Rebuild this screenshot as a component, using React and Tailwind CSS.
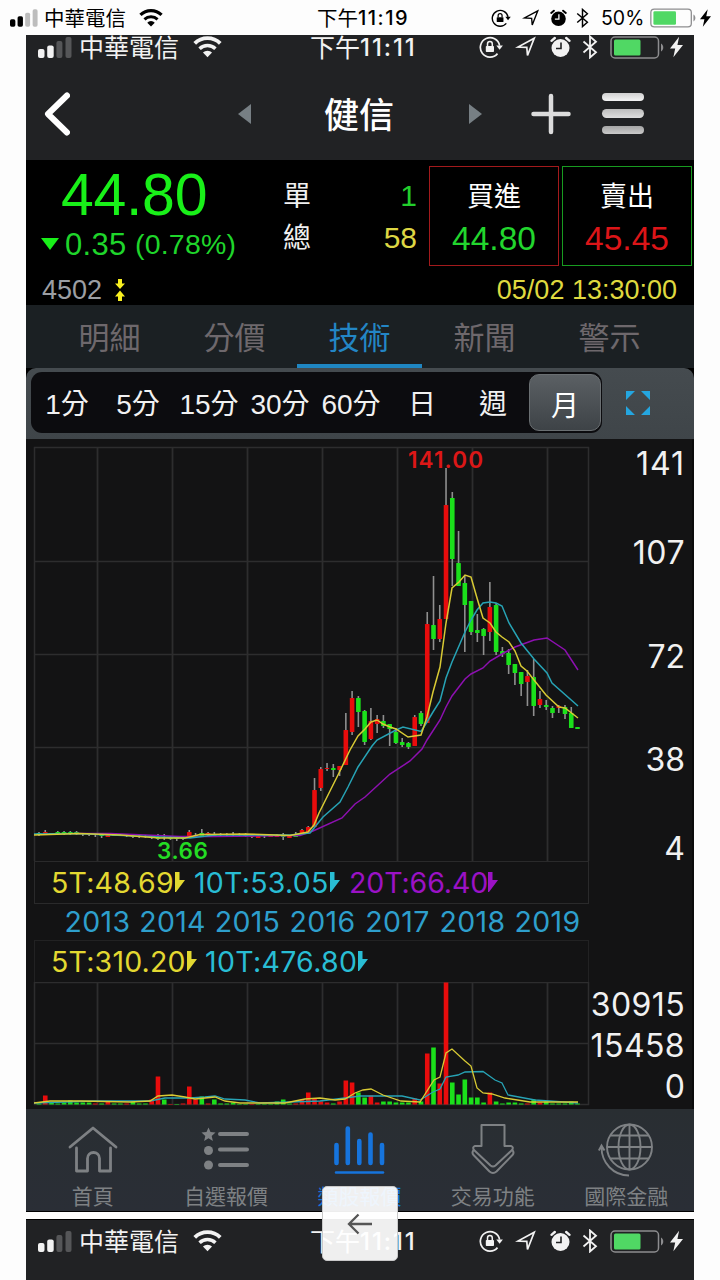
import React from "react";

const UP = "#e80c0c";
const DOWN = "#1be01b";
const YELLOW = "#d8ca34";
const CYAN = "#27a3b5";
const PURPLE = "#8d10b0";
const GRID = "#2d2d2e";

// [high, open/close top, open/close bottom, low, rising]
const candles = [
  [832, 833, 835, 836, 0], [830, 832, 835, 835, 1], [833, 833, 835, 835, 0], [831, 832, 834, 835, 0],
  [831, 832, 834, 835, 0], [831, 832, 834, 835, 0], [831, 832, 834, 835, 0], [833, 833, 834, 836, 0],
  [833, 834, 835, 836, 1], [833, 834, 835, 837, 0], [834, 835, 836, 838, 0], [834, 835, 837, 837, 1],
  [834, 835, 836, 836, 0], [834, 835, 836, 836, 1], [834, 835, 836, 837, 0], [835, 836, 837, 838, 0],
  [835, 836, 837, 838, 0], [835, 836, 837, 838, 0], [835, 837, 838, 839, 0], [834, 837, 839, 840, 0],
  [834, 837, 838, 840, 0], [836, 838, 839, 840, 0], [837, 838, 839, 841, 0], [837, 838, 839, 840, 0],
  [830, 832, 837, 837, 1], [833, 835, 837, 837, 1], [829, 833, 836, 836, 0], [832, 833, 835, 836, 1],
  [832, 834, 836, 836, 0], [833, 834, 835, 836, 0], [833, 834, 835, 836, 0], [832, 834, 835, 836, 0],
  [833, 834, 835, 836, 0], [833, 834, 836, 837, 0], [834, 835, 837, 838, 1], [834, 836, 838, 838, 1],
  [834, 835, 836, 838, 0], [834, 835, 837, 837, 1], [834, 836, 837, 837, 1], [833, 836, 837, 840, 0],
  [835, 835, 838, 838, 1], [832, 835, 837, 837, 0], [829, 830, 834, 834, 1], [826, 827, 832, 832, 1],
  [778, 790, 827, 827, 1], [767, 769, 788, 791, 1], [763, 768, 769, 771, 1], [764, 768, 770, 777, 0],
  [766, 766, 770, 776, 1], [713, 730, 765, 765, 1], [691, 698, 732, 735, 1], [696, 698, 712, 727, 0],
  [710, 711, 742, 745, 0], [708, 721, 739, 740, 1], [715, 719, 724, 733, 1], [715, 721, 726, 728, 0],
  [724, 724, 729, 746, 0], [728, 732, 743, 744, 0], [738, 742, 745, 747, 0], [742, 743, 747, 749, 0],
  [715, 717, 746, 746, 1], [711, 713, 724, 726, 0], [612, 624, 723, 723, 1], [576, 625, 639, 650, 0],
  [605, 619, 639, 642, 1], [468, 505, 619, 619, 1], [492, 498, 559, 586, 0], [531, 563, 586, 586, 0],
  [575, 583, 605, 652, 0], [601, 601, 632, 635, 0], [614, 630, 633, 642, 0], [628, 629, 636, 655, 0],
  [582, 607, 632, 641, 1], [603, 605, 652, 655, 0], [647, 651, 654, 657, 0], [649, 653, 665, 674, 0],
  [664, 664, 673, 685, 0], [672, 672, 684, 696, 0], [670, 676, 682, 706, 1], [659, 677, 706, 716, 0],
  [691, 699, 705, 708, 1], [700, 705, 707, 710, 0], [706, 708, 713, 718, 0], [705, 706, 708, 713, 1],
  [705, 707, 714, 719, 0], [707, 713, 728, 728, 0], [727, 727, 729, 729, 0],
].map((c, i) => ({ x: 39 + i * 6.262, c }));

const volumes = [
  1, 9, 2, 1, 2, 4, 2, 2, 2, 1, 1, 3, 1, 1, 1, 3, 1, 1, 5, 28, 5, 0.5, 0.5, 1, 18, 5, 8, 1, 5, 1, 1, 2,
  0.5, 0.5, 0.5, 0.5, 0.5, 0.5, 3, 5, 1, 1, 5, 12, 6, 3, 2, 1, 3, 24, 22, 12, 7, 9, 2, 3, 3, 2, 2, 2, 6,
  3, 51, 57, 21, 122, 22, 10, 25, 7, 7, 2, 12, 3, 1, 2, 2, 1, 1, 5, 2, 3, 1, 1, 1, 3, 1,
];
const volumeUp = [1, 9, 11, 14, 18, 19, 21, 23, 24, 25, 27, 34, 41, 42, 43, 44, 45, 46, 48, 49, 50, 53, 54, 60, 62, 64, 65, 72, 78, 80];

const ma5 =
  "34,835 80,833.5 120,835 160,838 185,838 200,834.5 245,834 290,835.5 308,832 314,825 319,813 339,773 350,750 358,736 365,729 371,722 377,720 383,724 390,727 396,729 408,737 421,735 427,717 433,692 440,667 446,623 452,588 459,582 465,575 471,577 477,598 483,618 490,623 496,632 502,637 509,642 515,651 521,666 527,671 534,680 546,695 559,707 565,708 578,718";
const ma10 =
  "34,834 75,833.5 160,837 190,838 215,835 250,835 290,835 310,833 323,817 340,802 348,787 358,767 372,746 377,740 396,730 403,727 421,731.5 427,722 433,712 440,701 446,678 452,662 465,632 471,620 477,610 483,603 490,602 496,603 502,606 509,623 521,643 534,659 547,673 552,683 578,706";
const ma20 =
  "75,833.5 110,833.5 180,836.5 215,836.5 300,835.5 313,831 342,818 355,804 365,797 377,786 390,774 410,761 422,749 427,740 440,720 446,707 452,696 465,679 471,674 483,668 490,661 502,654 515,647 534,640 547,638 565,650 578,670";
const vol5 =
  "34,1103 50,1101 80,1101 130,1102 150,1101 158,1096 172,1095 185,1097 195,1099 215,1097 225,1101 240,1103 285,1103 305,1099 320,1098 335,1100 345,1099 355,1093 363,1090 371,1089 383,1095 401,1101 420,1102 434,1080 440,1077 446,1053 452,1049 465,1061 471,1066 477,1088 483,1093 492,1094 505,1098 530,1102 578,1102";
const vol10 =
  "34,1103 95,1101 150,1101 165,1098 190,1098 205,1097 215,1096 225,1099 245,1100 260,1103 320,1101 345,1098 360,1096 402,1096 420,1100 433,1092 440,1089 446,1077 458,1075 465,1072 483,1071.5 495,1080 502,1083 508,1095 535,1100 578,1103";

const gridX = [97.5, 172.5, 247.5, 322.5, 397.5, 472.5, 547.5];

const Signal = ({ className }) => (
  <svg viewBox="0 0 34 21" className={className} fill="currentColor">
    <rect x="0" y="12" width="6.5" height="9" rx="2" />
    <rect x="9.2" y="8.5" width="6.5" height="12.5" rx="2" />
    <rect x="18.4" y="4" width="6" height="17" rx="2" opacity=".25" />
    <rect x="27.5" y="0" width="6" height="21" rx="2" opacity=".25" />
  </svg>
);

const Wifi = ({ className }) => (
  <svg viewBox="0 0 30 22" className={className} fill="none" stroke="currentColor">
    <path d="M1.8 7.2a19 19 0 0 1 26.4 0" strokeWidth="4" />
    <path d="M6.8 12.7a11.8 11.8 0 0 1 16.4 0" strokeWidth="3.6" />
    <path d="M15 21.5l-4.7-4.7a6.6 6.6 0 0 1 9.4 0z" fill="currentColor" stroke="none" />
  </svg>
);

const RotationLock = ({ className }) => (
  <svg viewBox="0 0 24 22" className={className} fill="none" stroke="currentColor">
    <path d="M18.5 17.6A9.7 9.7 0 1 1 20.6 9.6" strokeWidth="1.7" />
    <path d="M17.3 9.6h6.6l-3.3 4.2z" fill="currentColor" stroke="none" />
    <rect x="6.8" y="10" width="8.2" height="6" rx=".8" fill="currentColor" stroke="none" />
    <path d="M8.5 10.2V8a2.4 2.4 0 0 1 4.8 0v2.2" strokeWidth="1.5" />
  </svg>
);

const Location = ({ className }) => (
  <svg viewBox="0 0 22 22" className={className} fill="none" stroke="currentColor" strokeWidth="1.7">
    <path d="M19.2 2.3L3 11l8.800.4L12.500 19.500z" />
  </svg>
);

const Alarm = ({ className, hands }) => (
  <svg viewBox="0 0 21 22" className={className} fill="none" stroke="currentColor">
    <circle cx="10.5" cy="12" r="9" fill="currentColor" stroke="none" />
    <path d="M1.500 4.800L4.800 2M19.500 4.800L16.200 2" strokeWidth="2.4" strokeLinecap="round" />
    <path d="M11 6.500V12.500H6" className={hands} strokeWidth="1.6" />
  </svg>
);

const Bluetooth = ({ className }) => (
  <svg viewBox="0 0 16 24" className={className} fill="none" stroke="currentColor" strokeWidth="1.8">
    <path d="M1.500 6.500L14 17.200 8 22.500V1.500L14 6.800 1.500 17.500" />
  </svg>
);

const Battery = ({ className }) => (
  <svg viewBox="0 0 54 23" className={className} fill="none">
    <rect x="1" y="1" width="47.500" height="21" rx="4" stroke="#8d8d8f" strokeWidth="1.500" />
    <rect x="4" y="3.600" width="26.500" height="15.800" rx="1.500" fill="#50d864" />
    <path d="M51 7.500c3 1.500 3 6.500 0 8z" fill="#8d8d8f" />
  </svg>
);

const Bolt = ({ className }) => (
  <svg viewBox="0 0 14 22" className={className} fill="currentColor">
    <path d="M9.800 0L0 12.500h5.600L3.600 22 14 8.800H8z" />
  </svg>
);

// iOS status bar of the captured app
const InnerStatus = ({ offset }) => (
  <div className={`flex h-[26px] shrink-0 items-center text-[#f2f2f2] ${offset}`}>
    <Signal className="ml-3 h-[21px] w-[34px] shrink-0" />
    <span className="ml-[7px] w-[100px] pt-[2px] text-[25px] leading-[26px]">中華電信</span>
    <Wifi className="ml-[14px] h-[22px] w-[29px] shrink-0" />
    <div className="ml-[88px] flex w-[110px] items-center text-[25px] leading-[26px]">
      <span className="pt-[2px]">下午</span>
      <span className="pt-px font-['Inter',sans-serif] text-[24px] font-medium tracking-[1.900px]">11:11</span>
    </div>
    <RotationLock className="ml-[59px] h-[22px] w-6 shrink-0" />
    <Location className="ml-[12px] h-[22px] w-[22px] shrink-0" />
    <Alarm className="ml-[13px] h-[22px] w-[21px] shrink-0" hands="stroke-[#212224]" />
    <Bluetooth className="ml-[11px] h-6 w-4 shrink-0" />
    <Battery className="ml-[12px] h-[23px] w-[54px] shrink-0" />
    <Bolt className="ml-[6px] h-[22px] w-[13px] shrink-0" />
  </div>
);

const OuterStatus = () => (
  <div className="flex h-[35px] items-center text-black">
    <Signal className="ml-[10px] h-[18px] w-7 shrink-0" />
    <span className="ml-[6px] w-[83px] pt-[2px] text-[20.500px] leading-[33px]">中華電信</span>
    <Wifi className="ml-[12px] h-[18px] w-6 shrink-0" />
    <div className="ml-[154px] flex w-[93px] items-center text-[20.500px] leading-[33px]">
      <span className="pt-[2px]">下午</span>
      <span className="pt-px font-['Inter',sans-serif] text-[20px] font-medium tracking-[1.500px]">11:19</span>
    </div>
    <RotationLock className="ml-[81px] h-[18px] w-5 shrink-0" />
    <Location className="ml-[11px] h-[18px] w-[18px] shrink-0" />
    <Alarm className="ml-[10px] h-[18px] w-[17px] shrink-0" hands="stroke-white" />
    <Bluetooth className="ml-[9px] h-5 w-[13px] shrink-0" />
    <span className="ml-[12px] w-[43px] pt-[2px] font-['Inter',sans-serif] text-[19.500px]">50%</span>
    <Battery className="ml-[6px] h-[20px] w-[46px] shrink-0" />
    <Bolt className="ml-[4px] h-[18px] w-[11px] shrink-0" />
  </div>
);

const NavBar = () => (
  <div className="flex h-[107px] shrink-0 items-center">
    <svg viewBox="0 0 26 44" className="ml-[18px] h-11 w-[26px]" fill="none" stroke="#fff" strokeWidth="6" strokeLinecap="round" strokeLinejoin="round">
      <path d="M23 3.500L4 22l19 18.500" />
    </svg>
    <svg viewBox="0 0 13 20" className="ml-[168px] h-5 w-[13px]" fill="#777f84">
      <path d="M13 0v20L0 10z" />
    </svg>
    <h1 className="ml-[73px] w-[70px] pt-1 text-[35px] leading-[48px] font-medium text-white">健信</h1>
    <svg viewBox="0 0 13 20" className="ml-[75px] h-5 w-[13px]" fill="#777f84">
      <path d="M0 0v20l13-10z" />
    </svg>
    <svg viewBox="0 0 40 42" className="ml-[49px] h-[42px] w-10" fill="none" stroke="#dcdcdc" strokeWidth="4.500" strokeLinecap="round">
      <path d="M20 3v36M2.500 21h35" />
    </svg>
    <div className="ml-[31px] flex w-[42px] flex-col gap-2">
      <div className="h-[8.500px] rounded-full bg-linear-to-b from-[#d0d0d0] to-[#f4f4f4]" />
      <div className="h-[8.500px] rounded-full bg-linear-to-b from-[#bdbdbd] to-[#dedede]" />
      <div className="h-[8.500px] rounded-full bg-linear-to-b from-[#a5a5a5] to-[#c9c9c9]" />
    </div>
  </div>
);

const Quote = () => (
  <section className="flex h-[145px] flex-col bg-black leading-none">
    <div className="flex h-[110px]">
      <div className="w-[240px]">
        <div className="pt-[5px] pl-[35px] text-[59px] leading-[60px] tracking-[-0.300px] text-[#19f019]">44.80</div>
        <div className="mt-[4px] flex h-[30px] items-center pl-[15px] text-[#1fd52b]">
          <svg viewBox="0 0 18 12" className="mr-[6px] h-3 w-[18px]" fill="#19f019">
            <path d="M0 0h18L9 12z" />
          </svg>
          <span className="w-[70px] text-[31px] tracking-[0.300px]">0.35</span>
          <span className="text-[28.500px] tracking-[0.200px]">(0.78%)</span>
        </div>
      </div>
      <div className="flex w-[151px] flex-col pt-[14px]">
        <div className="flex h-[42px] items-center justify-between pl-[17px]">
          <span className="pt-[3px] text-[28px] text-[#f0f0f0]">單</span>
          <span className="pt-px text-[30px] text-[#22cf2c]">1</span>
        </div>
        <div className="flex h-[42px] items-center justify-between pl-[17px]">
          <span className="pt-[3px] text-[28px] text-[#f0f0f0]">總</span>
          <span className="pt-px text-[30px] text-[#ddd643]">58</span>
        </div>
      </div>
      <div className="mt-[6px] ml-[12px] flex h-[100px] w-[130px] flex-col items-center border-[1.500px] border-[#a31a1c] pt-[16px]">
        <span className="text-[27px] leading-[29px] text-white">買進</span>
        <span className="mt-[11px] text-[33.500px] leading-[32px] text-[#22d62e]">44.80</span>
      </div>
      <div className="mt-[6px] ml-[3px] flex h-[100px] w-[130px] flex-col items-center border-[1.500px] border-[#189b20] pt-[16px]">
        <span className="text-[27px] leading-[29px] text-white">賣出</span>
        <span className="mt-[11px] text-[33.500px] leading-[32px] text-[#dc1518]">45.45</span>
      </div>
    </div>
    <div className="flex h-[35px] items-center pt-[6px] pr-[17px] pl-4 text-[27px]">
      <span className="text-[#9b9ea3]">4502</span>
      <svg viewBox="0 0 10 22" className="-mt-[2px] ml-[13px] h-[22px] w-[10px]" fill="#f8ef20">
        <path d="M3 0h4v4.500h3L5 10 0 4.500h3zM3 22h4v-4.500h3L5 11.500 0 17.500h3z" />
      </svg>
      <span className="ml-auto text-[#dfd83f]">05/02 13:30:00</span>
    </div>
  </section>
);

const tabs = ["明細", "分價", "技術", "新聞", "警示"];

const Tabs = () => (
  <nav className="flex h-[63px] bg-[#1b2023] pr-[22px] pl-[21px] text-[31px]">
    {tabs.map((t) => (
      <div
        key={t}
        className={`flex flex-1 items-center justify-center border-b-4 pt-[9px] ${
          t === "技術" ? "border-[#1f86c2] text-[#2386c5]" : "border-transparent text-[#6e686c]"
        }`}
      >
        {t}
      </div>
    ))}
  </nav>
);

const periods = ["1分", "5分", "15分", "30分", "60分", "日", "週"];

const Periods = () => (
  <div className="flex h-[71px] items-center rounded-t-[10px] bg-linear-to-b from-[#454b4f] to-[#3f4549] pb-[2px] pl-[5px]">
    <div className="flex h-[61px] w-[571px] items-center rounded-[11px] bg-[#0c0c0f]">
      {periods.map((p) => (
        <div key={p} className="flex h-full w-[71px] items-center justify-center pt-[5px] pl-px text-[28px] text-[#f1f1f1]">
          {p}
        </div>
      ))}
      <div className="ml-px flex h-[57px] w-[72px] items-center justify-center rounded-[10px] border border-[#6a6f72] bg-linear-to-b from-[#5b6064] to-[#3e4347] pt-[8px] text-[28px] text-white">
        月
      </div>
    </div>
    <svg viewBox="0 0 24 24" className="ml-[23.500px] h-6 w-6" fill="#24a6e0">
      <path d="M0 0h9L0 9zM24 0v9l-9-9zM0 24v-9l9 9zM24 24h-9l9-9z" />
    </svg>
  </div>
);

const PriceChart = () => (
  <svg viewBox="26 439 564 422" className="h-[422px] w-[564px] shrink-0 overflow-visible" fill="none">
    <path d="M34.500 861V447.500H588.500V861M34 561.500H588M34 654.500H588M34 747.500H588" stroke={GRID} strokeWidth="1.500" />
    {gridX.map((x) => (
      <path key={x} d={`M${x} 447V861`} stroke={GRID} strokeWidth="1.800" />
    ))}
    {candles.map(({ x, c }) => (
      <g key={x}>
        <path d={`M${x} ${c[0]}V${c[3]}`} stroke="#8f8f8f" strokeWidth="1.600" />
        <rect x={x - 2.300} y={c[1]} width="4.600" height={c[2] - c[1]} rx=".6" fill={c[4] ? UP : DOWN} />
      </g>
    ))}
    <polyline points={ma20} stroke={PURPLE} strokeWidth="1.500" />
    <polyline points={ma10} stroke={CYAN} strokeWidth="1.500" />
    <polyline points={ma5} stroke={YELLOW} strokeWidth="1.500" />
    <text x="408" y="468" fill="#dc1717" fontSize="22.500" fontWeight="600" textLength="75" className="font-['Inter',sans-serif]">
      141.00
    </text>
    <text x="157" y="858.500" fill="#24dc24" fontSize="22.500" fontWeight="600" textLength="51" className="font-['Inter',sans-serif]">
      3.66
    </text>
  </svg>
);

const VolumeChart = () => (
  <svg viewBox="26 982 564 127" className="h-[127px] w-[564px] shrink-0" fill="none">
    <path d="M34.500 982V1104.500H588.500V982M34 982.500H588M34 1043.500H588" stroke={GRID} strokeWidth="1.500" />
    {gridX.map((x) => (
      <path key={x} d={`M${x} 982V1104`} stroke={GRID} strokeWidth="1.800" />
    ))}
    {volumes.map((v, i) => (
      <rect key={i} x={36.700 + i * 6.262} y={1104.500 - v} width="4.600" height={v} fill={volumeUp.includes(i) ? UP : DOWN} />
    ))}
    <polyline points={vol10} stroke={CYAN} strokeWidth="1.300" />
    <polyline points={vol5} stroke={YELLOW} strokeWidth="1.300" />
  </svg>
);

const Average = ({ className, children }) => (
  <div className={`flex items-center ${className}`}>
    {children}
    <svg viewBox="0 0 10 20" className="-mt-[2px] h-5 w-[10px] shrink-0" fill="currentColor">
      <path d="M0 0h4.500v8H10L1 20H0z" />
    </svg>
  </div>
);

const years = [2013, 2014, 2015, 2016, 2017, 2018, 2019];

const Chart = () => (
  <section className="flex h-[670px] justify-between bg-[#131314] font-['Inter',sans-serif] leading-none">
    <div className="w-[564px]">
      <PriceChart />
      <div className="ml-[8px] flex h-[42.500px] w-[555px] items-center border-[1.500px] border-[#2a2a2b] pt-px pl-[16px] text-[28.500px]">
        <Average className="w-[143px] text-[#e3d831]"><span className="w-[124px] tracking-[0.200px]">5T:48.69</span></Average>
        <Average className="w-[155px] text-[#29bdd4]"><span className="w-[136px] tracking-[0.250px]">10T:53.05</span></Average>
        <Average className="text-[#9b12c5]"><span className="w-[139px] tracking-[-0.100px]">20T:66.40</span></Average>
      </div>
      <div className="ml-[34px] flex h-[36.500px] w-[525px] items-center text-[28.500px] tracking-[0.300px] text-[#2e9fcc]">
        {years.map((y) => (
          <span key={y} className="w-[75px] text-center">{y}</span>
        ))}
      </div>
      <div className="ml-[8px] flex h-[42px] w-[555px] items-center border-x-[1.500px] border-t border-[#222223] pt-px pl-[16px] text-[28.500px]">
        <Average className="w-[154px] text-[#e3d831]"><span className="w-[136px] tracking-[0.200px]">5T:310.20</span></Average>
        <Average className="text-[#29bdd4]"><span className="w-[153px] tracking-[0.300px]">10T:476.80</span></Average>
      </div>
      <VolumeChart />
    </div>
    <div className="flex w-[104px] flex-col items-end border-r-2 border-[#0b0b0c] pt-[9px] pr-[7px] text-[32px] leading-[32px] text-[#f1f1f1]">
      <span className="tracking-[1px]">141</span>
      <span className="mt-[57px] tracking-[0.500px]">107</span>
      <span className="mt-[72px]">72</span>
      <span className="mt-[71px]">38</span>
      <span className="mt-[57px]">4</span>
      <span className="mt-[124px] tracking-[0.400px]">30915</span>
      <span className="mt-[9px] tracking-[0.400px]">15458</span>
      <span className="mt-[9px]">0</span>
    </div>
  </section>
);

const HomeIcon = () => (
  <svg viewBox="0 0 50 50" className="h-[50px] w-[50px]" fill="none" stroke="currentColor" strokeWidth="2.800" strokeLinecap="round" strokeLinejoin="round">
    <path d="M2 22L25 3l23 19M8.500 23v23h11V33.500c0-8 12-8 12 0V46h11V23" />
  </svg>
);

const ListIcon = () => (
  <svg viewBox="0 0 50 50" className="h-[50px] w-[50px]" fill="currentColor">
    <path d="M7.500 2.500l2 4.500 5 .5-3.800 3.500 1.200 5-4.400-2.700L3.100 16l1.200-5L.5 7.500l5-.5z" />
    <circle cx="7.500" cy="25.500" r="4.500" />
    <circle cx="7.500" cy="40" r="4.500" />
    <path d="M19 9h27M19 24.500h27M19 40h27" stroke="currentColor" strokeWidth="4" strokeLinecap="round" />
  </svg>
);

const BarsIcon = () => (
  <svg viewBox="0 0 52 50" className="h-[50px] w-[52px]" fill="none" stroke="currentColor" strokeWidth="4.600" strokeLinecap="round">
    <path d="M3.500 20v18M14.800 3.500V38M26.300 16v22M37.500 9.500V38M49 20v18" />
    <path d="M3 47.500h47" strokeWidth="2.500" />
  </svg>
);

const TradeIcon = () => (
  <svg viewBox="0 0 44 52" className="h-[52px] w-[44px]" fill="none" stroke="currentColor" strokeWidth="2" strokeLinejoin="round">
    <path d="M10.500 1h23v21h6.500q3 1 1 4L24.500 41.500q-2.500 2-5 0L3 26q-2-3 1-4h6.500z" />
    <path d="M2.500 26q-2 3 0 5l16 16.500q3.500 3 7 0l16-16.500q2-2 0-5" />
  </svg>
);

const GlobeIcon = () => (
  <svg viewBox="0 0 56 54" className="h-[54px] w-[56px]" fill="none" stroke="currentColor" strokeWidth="1.900">
    <circle cx="31.500" cy="24" r="22.500" />
    <ellipse cx="31.500" cy="24" rx="11" ry="22.500" />
    <path d="M31.500 1.500v45M9 24h45M12.500 12.500h38M12.500 35.500h38" />
    <path d="M3.500 24c0 16 12 28.500 27.500 28.500M.8 27.500l2.700-5 3 5" />
  </svg>
);

const navItems = [
  { label: "首頁", Icon: HomeIcon },
  { label: "自選報價", Icon: ListIcon },
  { label: "類股報價", Icon: BarsIcon, active: true },
  { label: "交易功能", Icon: TradeIcon },
  { label: "國際金融", Icon: GlobeIcon },
];

const BottomNav = () => (
  <nav className="flex h-[102px] bg-linear-to-b from-[#292e32] to-[#2a2e36] pr-px">
    {navItems.map(({ label, Icon, active }) => (
      <div key={label} className={`flex w-1/5 flex-col items-center pt-[14px] ${active ? "text-[#1674dd]" : "text-[#7e8184]"}`}>
        <div className="flex h-[54px] items-center">
          <Icon />
        </div>
        <span className="mt-[9px] text-[21px] leading-[22px]">{label}</span>
      </div>
    ))}
  </nav>
);

export default function App() {
  return (
    <div className="relative h-[1280px] w-[720px] overflow-hidden bg-[#fdfdfd] font-['Liberation_Sans','Noto_Sans_CJK_TC',sans-serif] whitespace-nowrap">
      <OuterStatus />
      <main className="mx-[26px]">
        <div className="flex h-[125px] flex-col bg-[#212224]">
          <InnerStatus offset="-mt-px" />
          <NavBar />
        </div>
        <Quote />
        <div className="bg-black">
          <Tabs />
          <Periods />
        </div>
        <Chart />
        <BottomNav />
        <div className="h-px bg-black" />
        <div className="mt-[7px] h-[61px] border-t border-black bg-[#212224]">
          <InnerStatus offset="mt-[8px]" />
        </div>
      </main>
      <button className="absolute top-[1186px] left-[322px] flex h-[75px] w-[76px] items-center justify-center rounded-[5px] border border-[#c9c9c9] bg-white/93">
        <svg viewBox="0 0 26 22" className="h-[22px] w-[26px]" fill="none" stroke="#555" strokeWidth="2.300">
          <path d="M11.500 1.500L2 11l9.500 9.500M2 11h23" />
        </svg>
      </button>
    </div>
  );
}
